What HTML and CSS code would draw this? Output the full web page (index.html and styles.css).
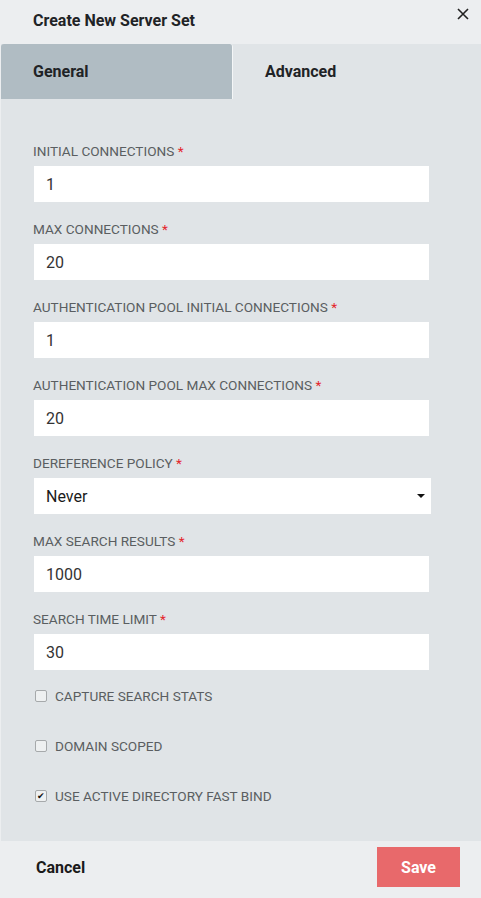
FILE: index.html
```html
<!DOCTYPE html>
<html lang="en">
<head>
  <meta charset="UTF-8" />
  <meta name="viewport" content="width=device-width, initial-scale=1.0" />
  <title>Create New Server Set</title>
  <link rel="stylesheet" href="styles.css">
</head>
<body>
  <div class="modal">
    <div class="header">
      <h2 class="title">Create New Server Set</h2>
      <span class="close">
        <svg width="12" height="12" viewBox="0 0 12 12"><path d="M1 1L11 11M11 1L1 11" stroke="#222" stroke-width="1.6" fill="none"/></svg>
      </span>
    </div>

    <div class="tabs">
      <div class="tab active">General</div>
      <div class="tab">Advanced</div>
    </div>

    <div class="panel">
      <div class="fields">
        <div class="field">
          <label>Initial Connections <span class="req">*</span></label>
          <div class="input">1</div>
        </div>
        <div class="field">
          <label>Max Connections <span class="req">*</span></label>
          <div class="input">20</div>
        </div>
        <div class="field">
          <label>Authentication Pool Initial Connections <span class="req">*</span></label>
          <div class="input">1</div>
        </div>
        <div class="field">
          <label>Authentication Pool Max Connections <span class="req">*</span></label>
          <div class="input">20</div>
        </div>
        <div class="field">
          <label>Dereference Policy <span class="req">*</span></label>
          <div class="input select">
            <span class="dark">Never</span>
            <span class="caret"></span>
          </div>
        </div>
        <div class="field">
          <label>Max Search Results <span class="req">*</span></label>
          <div class="input">1000</div>
        </div>
        <div class="field">
          <label>Search Time Limit <span class="req">*</span></label>
          <div class="input">30</div>
        </div>
      </div>

      <div class="checks">
        <div class="check"><span class="box"></span>Capture Search Stats</div>
        <div class="check"><span class="box"></span>Domain Scoped</div>
        <div class="check"><span class="box checked">✔</span>Use Active Directory Fast Bind</div>
      </div>
    </div>

    <div class="footer">
      <button class="cancel">Cancel</button>
      <button class="save">Save</button>
    </div>
  </div>
</body>
</html>
```

FILE: styles.css
```css
body {
  margin: 0;
  font-family: Roboto, 'Liberation Sans', sans-serif;
  background-color: #eceef0;
  color: #222;
}
.modal {
  width: 481px;
  height: 898px;
  display: flex;
  flex-direction: column;
}
.header {
  height: 44px;
  flex-shrink: 0;
  display: flex;
  align-items: flex-start;
  justify-content: space-between;
  padding: 0 12px 0 33px;
  box-sizing: border-box;
}
.title {
  margin: 11px 0 0;
  font-size: 16px;
  font-weight: bold;
  line-height: 19px;
  color: #1f2326;
}
.close {
  margin-top: 8px;
  display: flex;
}
.tabs {
  height: 55px;
  flex-shrink: 0;
  display: flex;
  margin-left: 1px;
  background-color: #e0e4e7;
}
.tab {
  display: flex;
  align-items: center;
  font-size: 16px;
  font-weight: bold;
  color: #1f2326;
  padding-left: 32px;
  width: 248px;
  box-sizing: border-box;
}
.tab.active {
  width: 232px;
  background-color: #b0bcc3;
  border-radius: 3px 3px 0 0;
  border-right: 1px solid #f4f6f7;
}
.panel {
  flex: 1;
  margin-left: 1px;
  background-color: #e0e4e7;
  padding: 44px 0 0 32px;
}
.field { margin-bottom: 19px; }
.fields .field:last-child { margin-bottom: 0; }
.field label {
  display: block;
  font-size: 13.6px;
  line-height: 16px;
  text-transform: uppercase;
  color: #5a5e61;
  margin-bottom: 7px;
}
.req { color: #e4252b; }
.input {
  width: 395px;
  height: 36px;
  margin-left: 1px;
  background-color: #fff;
  box-sizing: border-box;
  padding-left: 12px;
  display: flex;
  align-items: center;
  font-size: 16px;
  color: #333;
}
.select {
  width: 397px;
  justify-content: space-between;
  padding-right: 6px;
}
.dark { color: #1a1a1a; }
.caret {
  width: 0;
  height: 0;
  border-left: 4px solid transparent;
  border-right: 4px solid transparent;
  border-top: 4px solid #111;
}
.checks { padding-top: 1px; }
.check {
  height: 50px;
  display: flex;
  align-items: center;
  font-size: 13.6px;
  color: #5a5e61;
  text-transform: uppercase;
}
.box {
  width: 10px;
  height: 10px;
  border: 1px solid #a6a9ab;
  border-radius: 2px;
  background-color: #eef0f1;
  margin: 0 8px 0 2px;
  font-size: 9px;
  line-height: 10px;
  text-align: center;
  color: #111;
}
.footer {
  height: 57px;
  flex-shrink: 0;
  display: flex;
  align-items: flex-start;
  justify-content: space-between;
  padding: 6px 21px 0 36px;
  box-sizing: border-box;
}
button {
  border: none;
  font-family: inherit;
  font-weight: bold;
  font-size: 16px;
  cursor: pointer;
}
.cancel {
  background: none;
  padding: 0;
  height: 40px;
  color: #1a1a1a;
}
.save {
  width: 83px;
  height: 40px;
  background-color: #e8696b;
  color: #fff;
}
```
